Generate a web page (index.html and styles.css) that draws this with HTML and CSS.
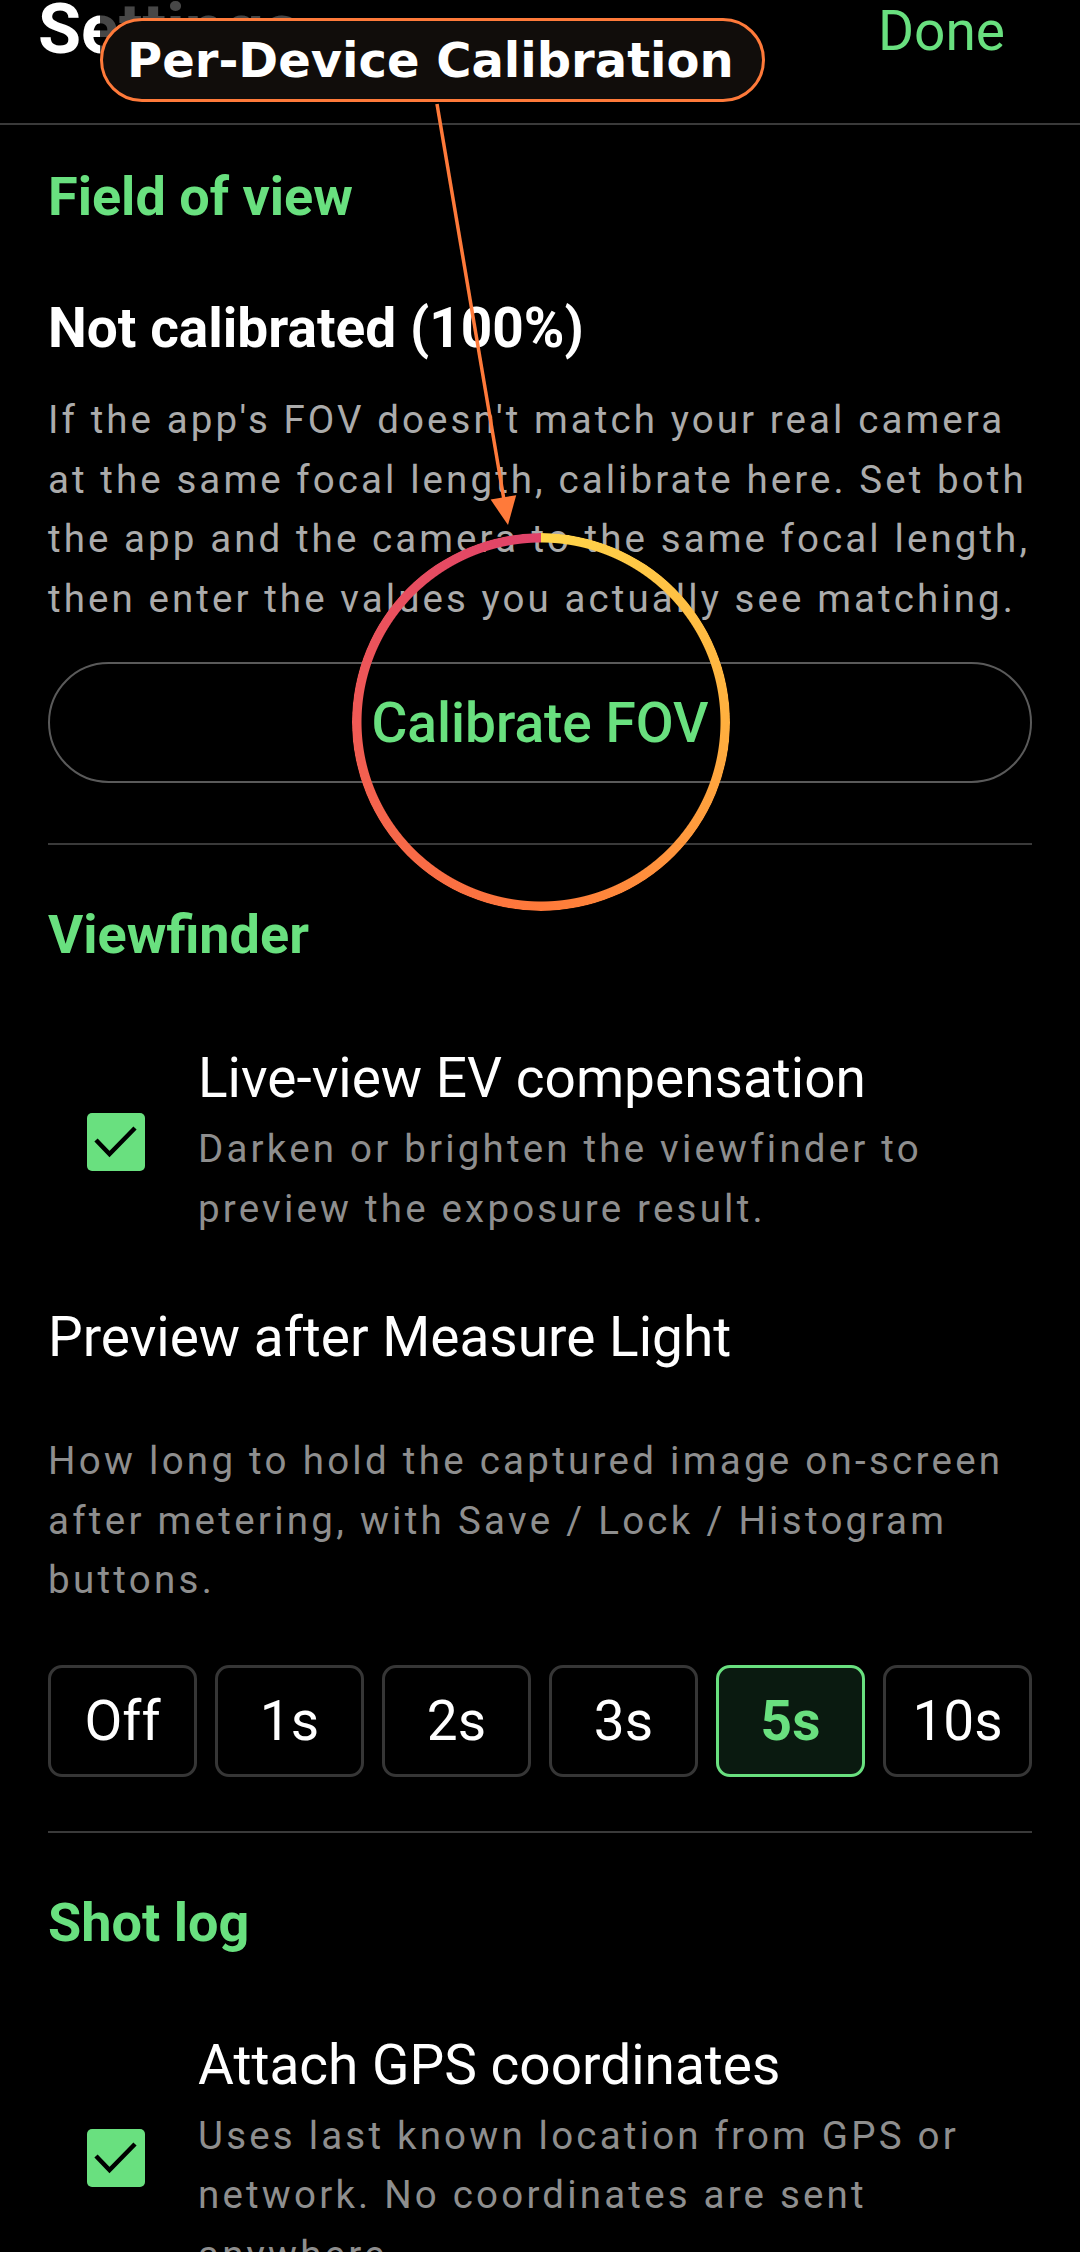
FILE: index.html
```html
<!DOCTYPE html>
<html lang="en">
<head>
    <meta charset="UTF-8" />
    <meta name="viewport" content="width=device-width, initial-scale=1.0" />
    <title>Settings</title>
    <link rel="stylesheet" href="styles.css">
</head>
<body>
<div class="screen">
    <div class="topbar">
        <h1>Settings</h1>
        <span class="done">Done</span>
    </div>

    <div class="content">
        <!-- Field of view -->
        <h2 class="section-title">Field of view</h2>
        <div class="status">Not calibrated (100%)</div>
        <p class="note">If the app's FOV doesn't match your real camera at the same focal length, calibrate here. Set both the app and the camera to the same focal length, then enter the values you actually see matching.</p>
        <div class="outline-btn">Calibrate FOV</div>
        <div class="sep"></div>

        <!-- Viewfinder -->
        <h2 class="section-title">Viewfinder</h2>
        <div class="check-row">
            <span class="checkbox">
                <svg viewBox="0 0 58 58" width="58" height="58"><polyline points="9,27 22.5,41 48,15" fill="none" stroke="#000" stroke-width="4.5"/></svg>
            </span>
            <div class="check-text">
                <div class="check-title">Live-view EV compensation</div>
                <div class="check-desc">Darken or brighten the viewfinder to preview the exposure result.</div>
            </div>
        </div>
        <div class="setting-title">Preview after Measure Light</div>
        <div class="setting-desc">How long to hold the captured image on-screen after metering, with Save / Lock / Histogram buttons.</div>
        <div class="seg-row">
            <div class="seg">Off</div>
            <div class="seg">1s</div>
            <div class="seg">2s</div>
            <div class="seg">3s</div>
            <div class="seg active">5s</div>
            <div class="seg">10s</div>
        </div>
        <div class="sep"></div>

        <!-- Shot log -->
        <h2 class="section-title">Shot log</h2>
        <div class="check-row second">
            <span class="checkbox">
                <svg viewBox="0 0 58 58" width="58" height="58"><polyline points="9,27 22.5,41 48,15" fill="none" stroke="#000" stroke-width="4.5"/></svg>
            </span>
            <div class="check-text">
                <div class="check-title">Attach GPS coordinates</div>
                <div class="check-desc">Uses last known location from GPS or network. No coordinates are sent anywhere.</div>
            </div>
        </div>
    </div>

    <!-- annotation overlay -->
    <div class="callout-wrap">
        <div class="callout">Per-Device Calibration</div>
    </div>
    <svg class="arrow" width="1080" height="2252" viewBox="0 0 1080 2252">
        <line x1="437" y1="104" x2="504" y2="500" stroke="#ff7a3a" stroke-width="3.5"/>
        <polygon points="508,525 490.6,499.6 516.2,495.2" fill="#ff7a3a"/>
    </svg>
    <div class="ring"></div>
</div>
</body>
</html>
```

FILE: styles.css
```css
body {
  margin: 0;
  background: #000;
  font-family: Roboto, "Noto Sans", sans-serif;
  color: #fff;
}
.screen {
  position: relative;
  height: 2252px;
  overflow: hidden;
}
.topbar {
  display: flex;
  justify-content: space-between;
  align-items: flex-start;
  height: 123px;
  padding: 0 75px 0 38px;
  border-bottom: 2px solid #3a3a3a;
}
.topbar h1 {
  margin: -6px 0 0;
  font-size: 70px;
  line-height: 70px;
  font-weight: 700;
}
.done {
  margin-top: -1px;
  font-size: 55px;
  line-height: 64px;
  color: #69e07f;
}
.content {
  padding: 0 48px;
}
.section-title {
  margin: 58px 0 0;
  font-size: 54px;
  line-height: 64px;
  font-weight: 700;
  color: #69e07f;
}
.section-title:first-child {
  margin-top: 40px;
}
.status {
  margin-top: 67px;
  font-size: 55px;
  line-height: 64px;
  font-weight: 700;
}
.note {
  margin: 30px -14px 0 0;
  font-size: 38.5px;
  line-height: 59.5px;
  letter-spacing: 0.08em;
  color: #ababab;
}
.outline-btn {
  margin-top: 34px;
  height: 121px;
  box-sizing: border-box;
  border: 2px solid #5a5a5a;
  border-radius: 61px;
  display: flex;
  align-items: center;
  justify-content: center;
  font-size: 55px;
  font-weight: 500;
  color: #69e07f;
}
.sep {
  height: 2px;
  margin-top: 60px;
  background: #3a3a3a;
}
.seg-row + .sep {
  margin-top: 54px;
}
.check-row {
  display: flex;
  align-items: center;
  gap: 53px;
  margin-top: 79px;
  padding: 0 30px 0 39px;
}
.check-row.second {
  margin-top: 78px;
}
.checkbox {
  flex: none;
  width: 58px;
  height: 58px;
  border-radius: 5px;
  background: #69e07f;
}
.checkbox svg {
  display: block;
}
.check-title {
  font-size: 55px;
  line-height: 64px;
}
.check-desc {
  margin-top: 9px;
  font-size: 38.5px;
  line-height: 59.5px;
  letter-spacing: 0.083em;
  color: #8e8e8e;
}
.setting-title {
  margin-top: 67px;
  font-size: 55px;
  line-height: 64px;
}
.setting-desc {
  margin: 62px -10px 0 0;
  font-size: 38.5px;
  line-height: 59.5px;
  letter-spacing: 0.085em;
  color: #8e8e8e;
}
.seg-row {
  display: grid;
  grid-template-columns: repeat(6, 1fr);
  gap: 18px;
  margin-top: 55px;
}
.seg {
  height: 112px;
  box-sizing: border-box;
  border: 3px solid #363636;
  border-radius: 14px;
  display: flex;
  align-items: center;
  justify-content: center;
  font-size: 55px;
}
.seg.active {
  border-color: #69e07f;
  background: #0a1a10;
  color: #69e07f;
  font-weight: 700;
}

/* annotation layer */
.callout-wrap {
  position: absolute;
  left: 100px;
  top: 0;
  padding-top: 18px;
  background: linear-gradient(rgba(0, 0, 0, 0.72), rgba(0, 0, 0, 0.72)) top / 100% 60px no-repeat;
}
.callout {
  height: 84px;
  box-sizing: border-box;
  padding: 0 28px 0 24px;
  border: 3px solid #ff7a3a;
  border-radius: 42px;
  background: #110d0b;
  font-family: "DejaVu Sans", sans-serif;
  font-weight: 700;
  font-size: 48px;
  line-height: 78px;
  color: #fff;
  white-space: nowrap;
}
.arrow {
  position: absolute;
  left: 0;
  top: 0;
}
.ring {
  position: absolute;
  left: 352px;
  top: 533px;
  width: 378px;
  height: 378px;
  border-radius: 50%;
  background: conic-gradient(#ffd54a, #ffb03f 25%, #ff7a3a 50%, #f05a55 75%, #e0426a);
  -webkit-mask: radial-gradient(farthest-side, transparent calc(100% - 10px), #000 calc(100% - 9px));
  mask: radial-gradient(farthest-side, transparent calc(100% - 10px), #000 calc(100% - 9px));
  filter: drop-shadow(0 0 6px rgba(255, 110, 50, 0.35));
}
```
